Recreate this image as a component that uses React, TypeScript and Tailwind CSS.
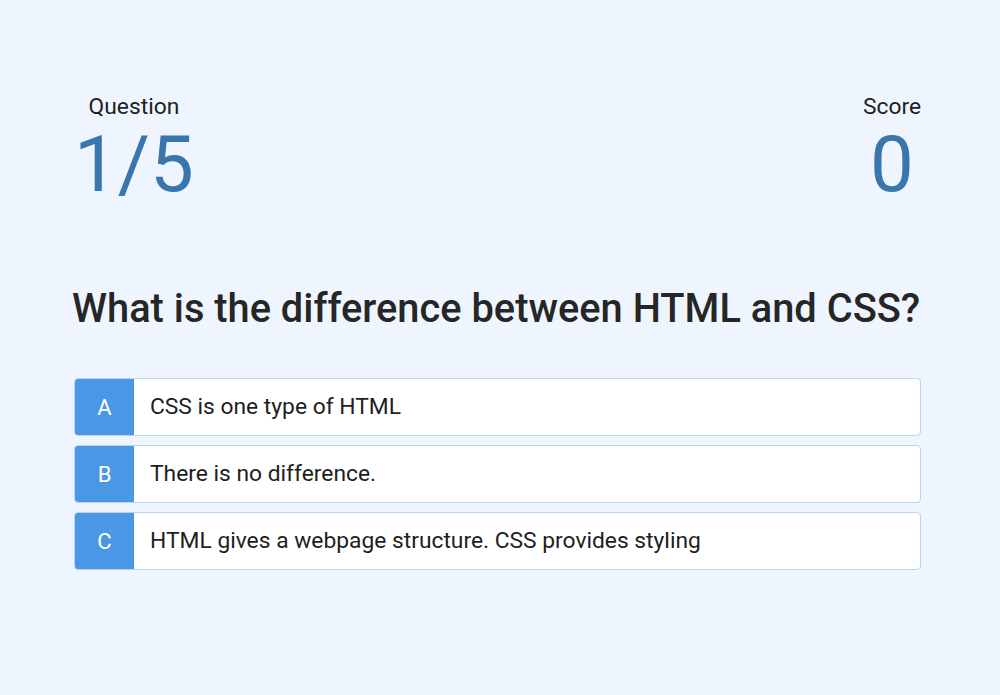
import React from "react";

const options = [
  { letter: "A", text: "CSS is one type of HTML" },
  { letter: "B", text: "There is no difference." },
  { letter: "C", text: "HTML gives a webpage structure. CSS provides styling" },
];

export default function App() {
  return (
    <div
      className="w-[1000px] h-[695px] bg-[#eef5fe] text-[#222]"
      style={{ fontFamily: "Roboto, 'Noto Sans', sans-serif" }}
    >
      <div className="ml-[74px] w-[847px] pt-[94px]">
        <div className="flex justify-between items-start">
          <div className="flex flex-col items-center">
            <div className="text-[22.8px] leading-[26px] text-[#1e1e1e]">Question</div>
            <div className="text-[78px] leading-[84px] text-[#3a76ae] mt-[3px]">1/5</div>
          </div>
          <div className="flex flex-col items-center">
            <div className="text-[22.8px] leading-[26px] text-[#1e1e1e]">Score</div>
            <div className="text-[78px] leading-[84px] text-[#3a76ae] mt-[3px]">0</div>
          </div>
        </div>
        <h1 className="mt-[78px] -ml-[2px] text-[39.8px] leading-[48px] font-medium text-[#262626] whitespace-nowrap">
          What is the difference between HTML and CSS?
        </h1>
        <div className="mt-[45px] flex flex-col gap-[9px]">
          {options.map((o) => (
            <div
              key={o.letter}
              className="flex h-[58px] rounded-[4px] border border-[#b6d6f4] bg-white overflow-hidden"
            >
              <div className="w-[59px] bg-[#4a97e6] text-white text-[22px] flex items-center justify-center">
                {o.letter}
              </div>
              <div className="flex items-center pl-[16px] text-[22.8px] text-[#1e1e1e]">{o.text}</div>
            </div>
          ))}
        </div>
      </div>
    </div>
  );
}
